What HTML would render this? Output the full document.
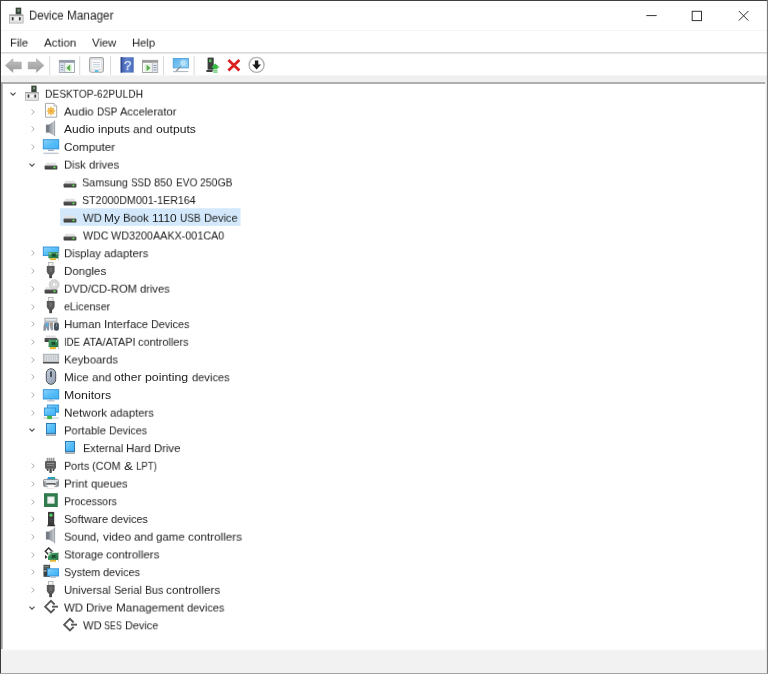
<!DOCTYPE html>
<html><head><meta charset="utf-8"><title>Device Manager</title>
<style>
html,body{margin:0;padding:0;}
body{width:768px;height:674px;overflow:hidden;background:#fff;font-family:"Liberation Sans",sans-serif;font-size:11.8px;color:#1c1c1c;position:relative;}
.abs{position:absolute;}
.t{will-change:transform;position:absolute;white-space:nowrap;line-height:18px;height:18px;transform-origin:0 50%;}
.ic{position:absolute;overflow:visible;}
</style></head><body>

<svg width="0" height="0" style="position:absolute"><defs>
<linearGradient id="gscr" x1="0" y1="0" x2="1" y2="1"><stop offset="0" stop-color="#8dd3fb"/><stop offset="0.5" stop-color="#56bef8"/><stop offset="1" stop-color="#40b0f4"/></linearGradient>
<linearGradient id="gspk" x1="0" y1="0" x2="1" y2="0"><stop offset="0" stop-color="#8a9098"/><stop offset="0.45" stop-color="#a9afb6"/><stop offset="1" stop-color="#d6d9dd"/></linearGradient>
<linearGradient id="gmouse" x1="0" y1="0" x2="1" y2="1"><stop offset="0" stop-color="#c4cedb"/><stop offset="1" stop-color="#8e9cb0"/></linearGradient>
<linearGradient id="ggrn" x1="0" y1="0" x2="1" y2="1"><stop offset="0" stop-color="#5aa678"/><stop offset="0.5" stop-color="#2f8a52"/><stop offset="1" stop-color="#217044"/></linearGradient>
<linearGradient id="gdisk" x1="0" y1="0" x2="0" y2="1"><stop offset="0" stop-color="#5a5a5a"/><stop offset="1" stop-color="#3a3a3a"/></linearGradient>
<radialGradient id="gdvd"><stop offset="0" stop-color="#ffffff"/><stop offset="0.25" stop-color="#fafafa"/><stop offset="0.32" stop-color="#c4c4c4"/><stop offset="0.5" stop-color="#e6e6e6"/><stop offset="0.7" stop-color="#cfcfcf"/><stop offset="1" stop-color="#dcdcdc"/></radialGradient>
</defs></svg>
<svg class="ic" style="left:0;top:0" width="768" height="674" viewBox="0 0 768 674"><rect x="1" y="30.1" width="766" height="0.9" fill="#f4f4f4"/><rect x="1" y="52.4" width="766" height="1.0" fill="#c4c4c4"/><rect x="1" y="75.4" width="766" height="6.9" fill="#f0f0f0"/><rect x="1" y="82.2" width="764.4" height="1.6" fill="#9c9c9c"/><rect x="1" y="82.2" width="1.7" height="567.2" fill="#a2a2a2"/><rect x="765.4" y="82.2" width="1.6" height="568" fill="#f3f3f3"/><rect x="1" y="649.4" width="766" height="1.2" fill="#f3f3f3"/><rect x="1" y="651.2" width="766" height="0.8" fill="#ececec"/><rect x="1" y="651.8" width="766" height="21.4" fill="#f2f2f2"/><rect x="60" y="208.25" width="180.6" height="17.55" fill="#d3e9fb"/></svg>
<div><span class="t" style="left:29.05px;top:6.00px;font-size:12.3px;transform:translateY(0.60px) scaleX(0.9207);">Device </span><span class="t" style="left:66.90px;top:6.00px;font-size:12.3px;transform:translateY(0.60px) scaleX(0.9593);">Manager</span></div>
<div><span class="t" style="left:10.35px;top:33.00px;transform:translateY(0.60px) scaleX(0.9521);">File</span></div>
<div><span class="t" style="left:43.95px;top:33.00px;transform:translateY(0.60px) scaleX(0.9835);">Action</span></div>
<div><span class="t" style="left:92.35px;top:33.00px;transform:translateY(0.60px) scaleX(0.9605);">View</span></div>
<div><span class="t" style="left:131.85px;top:33.00px;transform:translateY(0.60px) scaleX(0.9518);">Help</span></div>
<div><span class="t" style="left:45.05px;top:84.00px;transform:translateY(0.75px) scaleX(0.8650);">DESKTOP-62PULDH</span></div>
<div><span class="t" style="left:63.80px;top:102.00px;transform:translateY(0.47px) scaleX(0.9837);">Audio </span><span class="t" style="left:96.57px;top:102.00px;transform:translateY(0.47px) scaleX(0.8338);">DSP </span><span class="t" style="left:119.89px;top:102.00px;transform:translateY(0.47px) scaleX(0.9440);">Accelerator</span></div>
<div><span class="t" style="left:63.80px;top:120.00px;transform:translateY(0.18px) scaleX(1.0197);">Audio </span><span class="t" style="left:97.77px;top:120.00px;transform:translateY(0.18px) scaleX(1.0137);">inputs </span><span class="t" style="left:132.88px;top:120.00px;transform:translateY(0.18px) scaleX(0.9897);">and </span><span class="t" style="left:155.56px;top:120.00px;transform:translateY(0.18px) scaleX(1.0311);">outputs</span></div>
<div><span class="t" style="left:63.80px;top:137.00px;transform:translateY(0.90px) scaleX(0.9878);">Computer</span></div>
<div><span class="t" style="left:63.80px;top:155.00px;transform:translateY(0.62px) scaleX(0.9451);">Disk </span><span class="t" style="left:88.66px;top:155.00px;transform:translateY(0.62px) scaleX(0.9624);">drives</span></div>
<div><span class="t" style="left:82.30px;top:173.00px;transform:translateY(0.33px) scaleX(0.9212);">Samsung </span><span class="t" style="left:131.31px;top:173.00px;transform:translateY(0.33px) scaleX(0.8245);">SSD </span><span class="t" style="left:154.41px;top:173.00px;transform:translateY(0.33px) scaleX(0.9324);">850 </span><span class="t" style="left:175.87px;top:173.00px;transform:translateY(0.33px) scaleX(0.8567);">EVO </span><span class="t" style="left:200.32px;top:173.00px;transform:translateY(0.33px) scaleX(0.8884);">250GB</span></div>
<div><span class="t" style="left:82.30px;top:191.00px;transform:translateY(0.05px) scaleX(0.9028);">ST2000DM001-1ER164</span></div>
<div><span class="t" style="left:82.55px;top:208.00px;transform:translateY(0.77px) scaleX(0.9537);">WD </span><span class="t" style="left:104.44px;top:208.00px;transform:translateY(0.77px) scaleX(1.0062);">My </span><span class="t" style="left:123.42px;top:208.00px;transform:translateY(0.77px) scaleX(0.9563);">Book </span><span class="t" style="left:152.28px;top:208.00px;transform:translateY(0.77px) scaleX(1.0098);">1110 </span><span class="t" style="left:180.15px;top:208.00px;transform:translateY(0.77px) scaleX(0.8470);">USB </span><span class="t" style="left:203.84px;top:208.00px;transform:translateY(0.77px) scaleX(0.9319);">Device</span></div>
<div><span class="t" style="left:82.55px;top:226.00px;transform:translateY(0.49px) scaleX(0.8992);">WDC </span><span class="t" style="left:110.97px;top:226.00px;transform:translateY(0.49px) scaleX(0.9139);">WD3200AAKX-001CA0</span></div>
<div><span class="t" style="left:64.05px;top:244.00px;transform:translateY(0.20px) scaleX(0.9546);">Display </span><span class="t" style="left:104.14px;top:244.00px;transform:translateY(0.20px) scaleX(0.9654);">adapters</span></div>
<div><span class="t" style="left:64.05px;top:261.00px;transform:translateY(0.92px) scaleX(0.9739);">Dongles</span></div>
<div><span class="t" style="left:64.05px;top:279.00px;transform:translateY(0.64px) scaleX(0.9520);">DVD/CD-ROM </span><span class="t" style="left:140.16px;top:279.00px;transform:translateY(0.64px) scaleX(0.9465);">drives</span></div>
<div><span class="t" style="left:63.80px;top:297.00px;transform:translateY(0.35px) scaleX(0.9023);">eLicenser</span></div>
<div><span class="t" style="left:64.05px;top:315.00px;transform:translateY(0.07px) scaleX(0.9683);">Human </span><span class="t" style="left:104.00px;top:315.00px;transform:translateY(0.07px) scaleX(0.9610);">Interface </span><span class="t" style="left:151.25px;top:315.00px;transform:translateY(0.07px) scaleX(0.9163);">Devices</span></div>
<div><span class="t" style="left:64.05px;top:332.00px;transform:translateY(0.79px) scaleX(0.8116);">IDE </span><span class="t" style="left:82.97px;top:332.00px;transform:translateY(0.79px) scaleX(0.9238);">ATA/ATAPI </span><span class="t" style="left:138.40px;top:332.00px;transform:translateY(0.79px) scaleX(0.9291);">controllers</span></div>
<div><span class="t" style="left:64.05px;top:350.00px;transform:translateY(0.50px) scaleX(0.9558);">Keyboards</span></div>
<div><span class="t" style="left:64.05px;top:368.00px;transform:translateY(0.22px) scaleX(0.9917);">Mice </span><span class="t" style="left:91.93px;top:368.00px;transform:translateY(0.22px) scaleX(0.9829);">and </span><span class="t" style="left:114.46px;top:368.00px;transform:translateY(0.22px) scaleX(1.0210);">other </span><span class="t" style="left:145.10px;top:368.00px;transform:translateY(0.22px) scaleX(1.0459);">pointing </span><span class="t" style="left:191.51px;top:368.00px;transform:translateY(0.22px) scaleX(0.9425);">devices</span></div>
<div><span class="t" style="left:64.05px;top:385.00px;transform:translateY(0.94px) scaleX(1.0423);">Monitors</span></div>
<div><span class="t" style="left:64.05px;top:403.00px;transform:translateY(0.66px) scaleX(0.9968);">Network </span><span class="t" style="left:110.32px;top:403.00px;transform:translateY(0.66px) scaleX(0.9560);">adapters</span></div>
<div><span class="t" style="left:64.05px;top:421.00px;transform:translateY(0.37px) scaleX(0.9548);">Portable </span><span class="t" style="left:109.11px;top:421.00px;transform:translateY(0.37px) scaleX(0.9078);">Devices</span></div>
<div><span class="t" style="left:82.55px;top:439.00px;transform:translateY(0.09px) scaleX(0.9308);">External </span><span class="t" style="left:125.98px;top:439.00px;transform:translateY(0.09px) scaleX(0.9722);">Hard </span><span class="t" style="left:154.00px;top:439.00px;transform:translateY(0.09px) scaleX(0.9608);">Drive</span></div>
<div><span class="t" style="left:64.05px;top:456.00px;transform:translateY(0.81px) scaleX(0.9141);">Ports </span><span class="t" style="left:92.27px;top:456.00px;transform:translateY(0.81px) scaleX(0.9121);">(COM </span><span class="t" style="left:124.01px;top:456.00px;transform:translateY(0.81px) scaleX(1.1352);">&amp; </span><span class="t" style="left:136.00px;top:456.00px;transform:translateY(0.81px) scaleX(0.8099);">LPT)</span></div>
<div><span class="t" style="left:64.05px;top:474.00px;transform:translateY(0.52px) scaleX(0.9729);">Print </span><span class="t" style="left:90.79px;top:474.00px;transform:translateY(0.52px) scaleX(0.9471);">queues</span></div>
<div><span class="t" style="left:64.05px;top:492.00px;transform:translateY(0.24px) scaleX(0.8966);">Processors</span></div>
<div><span class="t" style="left:64.05px;top:509.00px;transform:translateY(0.96px) scaleX(0.9471);">Software </span><span class="t" style="left:111.26px;top:509.00px;transform:translateY(0.96px) scaleX(0.9237);">devices</span></div>
<div><span class="t" style="left:64.05px;top:527.00px;transform:translateY(0.67px) scaleX(0.9450);">Sound, </span><span class="t" style="left:102.54px;top:527.00px;transform:translateY(0.67px) scaleX(0.9923);">video </span><span class="t" style="left:133.69px;top:527.00px;transform:translateY(0.67px) scaleX(0.9779);">and </span><span class="t" style="left:156.10px;top:527.00px;transform:translateY(0.67px) scaleX(0.9726);">game </span><span class="t" style="left:187.98px;top:527.00px;transform:translateY(0.67px) scaleX(0.9921);">controllers</span></div>
<div><span class="t" style="left:64.05px;top:545.00px;transform:translateY(0.39px) scaleX(0.9504);">Storage </span><span class="t" style="left:106.45px;top:545.00px;transform:translateY(0.39px) scaleX(0.9833);">controllers</span></div>
<div><span class="t" style="left:64.05px;top:563.00px;transform:translateY(0.11px) scaleX(0.9198);">System </span><span class="t" style="left:103.35px;top:563.00px;transform:translateY(0.11px) scaleX(0.9276);">devices</span></div>
<div><span class="t" style="left:64.05px;top:580.00px;transform:translateY(0.83px) scaleX(0.9498);">Universal </span><span class="t" style="left:113.92px;top:580.00px;transform:translateY(0.83px) scaleX(0.9220);">Serial </span><span class="t" style="left:144.92px;top:580.00px;transform:translateY(0.83px) scaleX(0.8932);">Bus </span><span class="t" style="left:166.26px;top:580.00px;transform:translateY(0.83px) scaleX(0.9961);">controllers</span></div>
<div><span class="t" style="left:63.80px;top:598.00px;transform:translateY(0.54px) scaleX(0.9613);">WD </span><span class="t" style="left:85.87px;top:598.00px;transform:translateY(0.54px) scaleX(0.9632);">Drive </span><span class="t" style="left:115.55px;top:598.00px;transform:translateY(0.54px) scaleX(0.9878);">Management </span><span class="t" style="left:186.72px;top:598.00px;transform:translateY(0.54px) scaleX(0.9373);">devices</span></div>
<div><span class="t" style="left:82.55px;top:616.00px;transform:translateY(0.26px) scaleX(0.9447);">WD </span><span class="t" style="left:104.24px;top:616.00px;transform:translateY(0.26px) scaleX(0.7545);">SES </span><span class="t" style="left:125.16px;top:616.00px;transform:translateY(0.26px) scaleX(0.9231);">Device</span></div>
<svg class="ic" style="left:8.30px;top:89.76px" width="10" height="8" viewBox="0 0 10 8"><path d="M2.5 2.7 L5 5.2 L7.5 2.7" fill="none" stroke="#4a4a4a" stroke-width="1.15"/></svg>
<svg class="ic" style="left:28.50px;top:106.73px" width="8" height="10" viewBox="0 0 8 10"><path d="M2.7 2.4 L5.2 5 L2.7 7.6" fill="none" stroke="#adadad" stroke-width="1.0"/></svg>
<svg class="ic" style="left:28.50px;top:124.44px" width="8" height="10" viewBox="0 0 8 10"><path d="M2.7 2.4 L5.2 5 L2.7 7.6" fill="none" stroke="#adadad" stroke-width="1.0"/></svg>
<svg class="ic" style="left:28.50px;top:142.16px" width="8" height="10" viewBox="0 0 8 10"><path d="M2.7 2.4 L5.2 5 L2.7 7.6" fill="none" stroke="#adadad" stroke-width="1.0"/></svg>
<svg class="ic" style="left:27.40px;top:160.63px" width="10" height="8" viewBox="0 0 10 8"><path d="M2.5 2.7 L5 5.2 L7.5 2.7" fill="none" stroke="#4a4a4a" stroke-width="1.15"/></svg>
<svg class="ic" style="left:28.50px;top:248.46px" width="8" height="10" viewBox="0 0 8 10"><path d="M2.7 2.4 L5.2 5 L2.7 7.6" fill="none" stroke="#adadad" stroke-width="1.0"/></svg>
<svg class="ic" style="left:28.50px;top:266.18px" width="8" height="10" viewBox="0 0 8 10"><path d="M2.7 2.4 L5.2 5 L2.7 7.6" fill="none" stroke="#adadad" stroke-width="1.0"/></svg>
<svg class="ic" style="left:28.50px;top:283.90px" width="8" height="10" viewBox="0 0 8 10"><path d="M2.7 2.4 L5.2 5 L2.7 7.6" fill="none" stroke="#adadad" stroke-width="1.0"/></svg>
<svg class="ic" style="left:28.50px;top:301.61px" width="8" height="10" viewBox="0 0 8 10"><path d="M2.7 2.4 L5.2 5 L2.7 7.6" fill="none" stroke="#adadad" stroke-width="1.0"/></svg>
<svg class="ic" style="left:28.50px;top:319.33px" width="8" height="10" viewBox="0 0 8 10"><path d="M2.7 2.4 L5.2 5 L2.7 7.6" fill="none" stroke="#adadad" stroke-width="1.0"/></svg>
<svg class="ic" style="left:28.50px;top:337.05px" width="8" height="10" viewBox="0 0 8 10"><path d="M2.7 2.4 L5.2 5 L2.7 7.6" fill="none" stroke="#adadad" stroke-width="1.0"/></svg>
<svg class="ic" style="left:28.50px;top:354.76px" width="8" height="10" viewBox="0 0 8 10"><path d="M2.7 2.4 L5.2 5 L2.7 7.6" fill="none" stroke="#adadad" stroke-width="1.0"/></svg>
<svg class="ic" style="left:28.50px;top:372.48px" width="8" height="10" viewBox="0 0 8 10"><path d="M2.7 2.4 L5.2 5 L2.7 7.6" fill="none" stroke="#adadad" stroke-width="1.0"/></svg>
<svg class="ic" style="left:28.50px;top:390.20px" width="8" height="10" viewBox="0 0 8 10"><path d="M2.7 2.4 L5.2 5 L2.7 7.6" fill="none" stroke="#adadad" stroke-width="1.0"/></svg>
<svg class="ic" style="left:28.50px;top:407.91px" width="8" height="10" viewBox="0 0 8 10"><path d="M2.7 2.4 L5.2 5 L2.7 7.6" fill="none" stroke="#adadad" stroke-width="1.0"/></svg>
<svg class="ic" style="left:27.40px;top:426.38px" width="10" height="8" viewBox="0 0 10 8"><path d="M2.5 2.7 L5 5.2 L7.5 2.7" fill="none" stroke="#4a4a4a" stroke-width="1.15"/></svg>
<svg class="ic" style="left:28.50px;top:461.07px" width="8" height="10" viewBox="0 0 8 10"><path d="M2.7 2.4 L5.2 5 L2.7 7.6" fill="none" stroke="#adadad" stroke-width="1.0"/></svg>
<svg class="ic" style="left:28.50px;top:478.78px" width="8" height="10" viewBox="0 0 8 10"><path d="M2.7 2.4 L5.2 5 L2.7 7.6" fill="none" stroke="#adadad" stroke-width="1.0"/></svg>
<svg class="ic" style="left:28.50px;top:496.50px" width="8" height="10" viewBox="0 0 8 10"><path d="M2.7 2.4 L5.2 5 L2.7 7.6" fill="none" stroke="#adadad" stroke-width="1.0"/></svg>
<svg class="ic" style="left:28.50px;top:514.22px" width="8" height="10" viewBox="0 0 8 10"><path d="M2.7 2.4 L5.2 5 L2.7 7.6" fill="none" stroke="#adadad" stroke-width="1.0"/></svg>
<svg class="ic" style="left:28.50px;top:531.93px" width="8" height="10" viewBox="0 0 8 10"><path d="M2.7 2.4 L5.2 5 L2.7 7.6" fill="none" stroke="#adadad" stroke-width="1.0"/></svg>
<svg class="ic" style="left:28.50px;top:549.65px" width="8" height="10" viewBox="0 0 8 10"><path d="M2.7 2.4 L5.2 5 L2.7 7.6" fill="none" stroke="#adadad" stroke-width="1.0"/></svg>
<svg class="ic" style="left:28.50px;top:567.37px" width="8" height="10" viewBox="0 0 8 10"><path d="M2.7 2.4 L5.2 5 L2.7 7.6" fill="none" stroke="#adadad" stroke-width="1.0"/></svg>
<svg class="ic" style="left:28.50px;top:585.08px" width="8" height="10" viewBox="0 0 8 10"><path d="M2.7 2.4 L5.2 5 L2.7 7.6" fill="none" stroke="#adadad" stroke-width="1.0"/></svg>
<svg class="ic" style="left:27.40px;top:603.55px" width="10" height="8" viewBox="0 0 10 8"><path d="M2.5 2.7 L5 5.2 L7.5 2.7" fill="none" stroke="#4a4a4a" stroke-width="1.15"/></svg>
<svg class="ic" style="left:23.60px;top:85.46px" width="16" height="16" viewBox="0 0 16 16"><rect x="7.3" y="0.6" width="5.3" height="6.8" fill="#3c463e"/><rect x="9.1" y="2.2" width="1.9" height="2.1" fill="#78a87b"/><rect x="1.5" y="7.5" width="12.9" height="7.8" fill="#e4e4e4" stroke="#a9a9a9" stroke-width="0.7"/><rect x="1.5" y="7.3" width="12.9" height="1" fill="#9a9a9a"/><rect x="3.6" y="9.6" width="1.7" height="3.2" rx="0.8" fill="#3a3a3a"/><rect x="10.4" y="9.6" width="1.7" height="3.2" rx="0.8" fill="#3a3a3a"/><rect x="6.4" y="10" width="3" height="2.2" fill="#fafafa"/></svg>
<svg class="ic" style="left:43.00px;top:103.18px" width="16" height="16" viewBox="0 0 16 16"><path d="M2.5 0.4 H11 L13.7 3.1 V14.2 H2.5Z" fill="#fff" stroke="#9ea3a9" stroke-width="0.9"/><path d="M11 0.4 V3.1 H13.7" fill="#eef0f2" stroke="#9ea3a9" stroke-width="0.7"/><circle cx="8" cy="8" r="3" fill="#f2bb52"/><g stroke="#f2bb52" stroke-width="1.6"><path d="M8 3.8 V12.2 M3.8 8 H12.2 M5 5 L11 11 M11 5 L5 11"/></g><circle cx="8" cy="8" r="1.2" fill="#eaa93a"/></svg>
<svg class="ic" style="left:43.00px;top:120.89px" width="16" height="16" viewBox="0 0 16 16"><rect x="2.9" y="3.6" width="3.3" height="8" fill="#767c84"/><path d="M6 3.6 L12 -0.4 V15.2 L6 11.6Z" fill="url(#gspk)"/><rect x="11.2" y="-0.4" width="0.9" height="15.6" fill="#969ca3"/></svg>
<svg class="ic" style="left:43.00px;top:138.61px" width="16" height="16" viewBox="0 0 16 16"><rect x="0.3" y="0.7" width="15.4" height="9.2" fill="url(#gscr)" stroke="#2e8fd8" stroke-width="0.9"/><rect x="5" y="10.4" width="6" height="1.6" fill="#9fb0c4"/><rect x="0.4" y="13.6" width="15.2" height="1.5" fill="#c3cbd6"/></svg>
<svg class="ic" style="left:43.00px;top:156.33px" width="16" height="16" viewBox="0 0 16 16"><path d="M2.2 9.6 L3.4 6.8 H12.6 L13.8 9.6Z" fill="#e2e2e2"/><rect x="1.6" y="9.5" width="12.8" height="3.9" rx="0.7" fill="url(#gdisk)"/><rect x="10" y="10.5" width="2.8" height="1.9" fill="#3f9a3c"/><rect x="10.8" y="10.8" width="1.4" height="1.2" fill="#7fe070"/></svg>
<svg class="ic" style="left:61.60px;top:174.04px" width="16" height="16" viewBox="0 0 16 16"><path d="M2.2 9.6 L3.4 6.8 H12.6 L13.8 9.6Z" fill="#e2e2e2"/><rect x="1.6" y="9.5" width="12.8" height="3.9" rx="0.7" fill="url(#gdisk)"/><rect x="10" y="10.5" width="2.8" height="1.9" fill="#3f9a3c"/><rect x="10.8" y="10.8" width="1.4" height="1.2" fill="#7fe070"/></svg>
<svg class="ic" style="left:61.60px;top:191.76px" width="16" height="16" viewBox="0 0 16 16"><path d="M2.2 9.6 L3.4 6.8 H12.6 L13.8 9.6Z" fill="#e2e2e2"/><rect x="1.6" y="9.5" width="12.8" height="3.9" rx="0.7" fill="url(#gdisk)"/><rect x="10" y="10.5" width="2.8" height="1.9" fill="#3f9a3c"/><rect x="10.8" y="10.8" width="1.4" height="1.2" fill="#7fe070"/></svg>
<svg class="ic" style="left:61.60px;top:209.48px" width="16" height="16" viewBox="0 0 16 16"><path d="M2.2 9.6 L3.4 6.8 H12.6 L13.8 9.6Z" fill="#e2e2e2"/><rect x="1.6" y="9.5" width="12.8" height="3.9" rx="0.7" fill="url(#gdisk)"/><rect x="10" y="10.5" width="2.8" height="1.9" fill="#3f9a3c"/><rect x="10.8" y="10.8" width="1.4" height="1.2" fill="#7fe070"/></svg>
<svg class="ic" style="left:61.60px;top:227.19px" width="16" height="16" viewBox="0 0 16 16"><path d="M2.2 9.6 L3.4 6.8 H12.6 L13.8 9.6Z" fill="#e2e2e2"/><rect x="1.6" y="9.5" width="12.8" height="3.9" rx="0.7" fill="url(#gdisk)"/><rect x="10" y="10.5" width="2.8" height="1.9" fill="#3f9a3c"/><rect x="10.8" y="10.8" width="1.4" height="1.2" fill="#7fe070"/></svg>
<svg class="ic" style="left:43.00px;top:244.91px" width="16" height="16" viewBox="0 0 16 16"><rect x="0.3" y="2" width="15.4" height="8.6" fill="url(#gscr)" stroke="#2e8fd8" stroke-width="0.9"/><rect x="5.4" y="7" width="10.2" height="6.3" fill="url(#ggrn)"/><rect x="9" y="9" width="3.6" height="2.6" fill="#1d4a2e"/><rect x="6.4" y="8" width="1.2" height="1.2" fill="#bfe6c8"/><rect x="13.4" y="8.2" width="1.2" height="1.2" fill="#bfe6c8"/><rect x="7" y="13.3" width="6" height="1.8" fill="#e3b52e"/><rect x="15.1" y="6.4" width="0.7" height="8.6" fill="#b8b8b8"/></svg>
<svg class="ic" style="left:43.00px;top:262.63px" width="16" height="16" viewBox="0 0 16 16"><rect x="5.4" y="-0.5" width="4.6" height="3.6" fill="#f4f4f4" stroke="#b4b4b4" stroke-width="0.9"/><path d="M3.8 3 H11.6 V8.2 Q11.6 10.6 9.4 11.9 H6 Q3.8 10.6 3.8 8.2Z" fill="#585858"/><rect x="6.2" y="4.6" width="3" height="4.4" rx="1" fill="#6c6c6c"/><rect x="6.2" y="11.6" width="2.8" height="3.6" fill="#474747"/></svg>
<svg class="ic" style="left:43.00px;top:280.35px" width="16" height="16" viewBox="0 0 16 16"><path d="M2.2 9.8 L3.4 6.9 H9 V9.8Z" fill="#e4e4e4"/><circle cx="11.2" cy="4.6" r="5.1" fill="url(#gdvd)" stroke="#c2c2c2" stroke-width="0.5"/><rect x="1.6" y="9.6" width="12.8" height="3.8" rx="0.7" fill="url(#gdisk)"/><rect x="10" y="10.5" width="2.8" height="1.9" fill="#3f9a3c"/><rect x="10.8" y="10.8" width="1.4" height="1.2" fill="#7fe070"/></svg>
<svg class="ic" style="left:43.00px;top:298.06px" width="16" height="16" viewBox="0 0 16 16"><rect x="5.4" y="-0.5" width="4.6" height="3.6" fill="#f4f4f4" stroke="#b4b4b4" stroke-width="0.9"/><path d="M3.8 3 H11.6 V8.2 Q11.6 10.6 9.4 11.9 H6 Q3.8 10.6 3.8 8.2Z" fill="#585858"/><rect x="6.2" y="4.6" width="3" height="4.4" rx="1" fill="#6c6c6c"/><rect x="6.2" y="11.6" width="2.8" height="3.6" fill="#474747"/></svg>
<svg class="ic" style="left:43.00px;top:315.78px" width="16" height="16" viewBox="0 0 16 16"><rect x="1.3" y="1.7" width="13.1" height="4.9" fill="#b6bbc0"/><rect x="2.6" y="3.2" width="10.6" height="1.3" fill="#f4f5f6"/><path d="M1.6 6.4 H6.2 V14.6 H4.4 L3.6 11.6 L2.6 14.7 H0.4 Q-0.2 10 1.6 6.4Z" fill="#8c97a4"/><rect x="3" y="6.9" width="2.2" height="3.6" fill="#58aee0"/><path d="M6.5 6.5 H10 V14.3 H8 Q6.6 11 6.5 6.5Z" fill="#979fa9"/><rect x="7.6" y="6.9" width="1.1" height="2.8" fill="#c98f55"/><rect x="10.9" y="6.6" width="5" height="8.2" rx="2.1" fill="#47525f"/><rect x="13" y="7.6" width="0.8" height="3" fill="#8d9aa8"/></svg>
<svg class="ic" style="left:43.00px;top:333.50px" width="16" height="16" viewBox="0 0 16 16"><path d="M2.2 4.2 L3.2 1.6 H12.4 L13.4 4.2Z" fill="#e0e0e0"/><rect x="1.6" y="4" width="12.6" height="4" rx="0.6" fill="url(#gdisk)"/><rect x="5.6" y="5.6" width="9.8" height="7.5" fill="url(#ggrn)"/><rect x="8.6" y="8" width="3.6" height="2.8" fill="#1d4a2e"/><rect x="12.8" y="6.6" width="1.2" height="1.2" fill="#bfe6c8"/><rect x="6.8" y="13.1" width="6.2" height="2.1" fill="#e3b52e"/><rect x="15" y="5" width="0.7" height="10.2" fill="#b8b8b8"/></svg>
<svg class="ic" style="left:43.00px;top:351.21px" width="16" height="16" viewBox="0 0 16 16"><rect x="0.2" y="3.1" width="15.6" height="8.2" fill="#bcc1c6" stroke="#a2a8ae" stroke-width="0.6"/><g fill="#eef0f1"><rect x="1.6" y="4.5" width="12.8" height="1.1"/><rect x="1.6" y="6.5" width="12.8" height="1.1"/><rect x="1.6" y="8.5" width="12.8" height="1.1"/></g><g fill="#bcc1c6"><rect x="3.4" y="4.4" width="0.6" height="5.4"/><rect x="5.6" y="4.4" width="0.6" height="5.4"/><rect x="7.8" y="4.4" width="0.6" height="5.4"/><rect x="10" y="4.4" width="0.6" height="5.4"/><rect x="12.2" y="4.4" width="0.6" height="5.4"/></g><rect x="0" y="11.1" width="16" height="1.4" fill="#474747"/></svg>
<svg class="ic" style="left:43.00px;top:368.93px" width="16" height="16" viewBox="0 0 16 16"><rect x="3.3" y="-0.3" width="9.4" height="15.6" rx="4.7" fill="url(#gmouse)" stroke="#4a5058" stroke-width="1"/><rect x="7.1" y="2.2" width="1.8" height="6" rx="0.9" fill="#3f454d"/></svg>
<svg class="ic" style="left:43.00px;top:386.65px" width="16" height="16" viewBox="0 0 16 16"><rect x="0.3" y="2.7" width="15.4" height="9.3" fill="url(#gscr)" stroke="#2e8fd8" stroke-width="0.9"/><rect x="7" y="12.4" width="2" height="1" fill="#9aa4b0"/><rect x="4.2" y="13.4" width="7.6" height="1" fill="#a9b2be"/></svg>
<svg class="ic" style="left:43.00px;top:404.36px" width="16" height="16" viewBox="0 0 16 16"><rect x="4.4" y="1" width="11.2" height="7.2" fill="url(#gscr)" stroke="#2e8fd8" stroke-width="0.9"/><rect x="1.4" y="4" width="11.2" height="7.4" fill="url(#gscr)" stroke="#2e8fd8" stroke-width="0.9"/><rect x="0.2" y="13.2" width="15.6" height="1.9" fill="#dedede"/><rect x="4.2" y="11.8" width="4.8" height="3.3" fill="#42b648"/></svg>
<svg class="ic" style="left:43.00px;top:422.08px" width="16" height="16" viewBox="0 0 16 16"><rect x="3.1" y="1" width="9.8" height="12.7" fill="#7f8d9a"/><rect x="3.5" y="1.4" width="9" height="9.9" fill="url(#gscr)" stroke="#2474b0" stroke-width="0.9"/><rect x="3.8" y="12.1" width="8.4" height="0.7" fill="#c9d2db"/></svg>
<svg class="ic" style="left:61.60px;top:439.80px" width="16" height="16" viewBox="0 0 16 16"><rect x="3.1" y="1" width="9.8" height="12.7" fill="#7f8d9a"/><rect x="3.5" y="1.4" width="9" height="9.9" fill="url(#gscr)" stroke="#2474b0" stroke-width="0.9"/><rect x="3.8" y="12.1" width="8.4" height="0.7" fill="#c9d2db"/></svg>
<svg class="ic" style="left:43.00px;top:457.52px" width="16" height="16" viewBox="0 0 16 16"><rect x="3.2" y="-0.2" width="8.6" height="3.4" fill="#d6d6d6"/><g fill="#8a8a8a"><rect x="4.2" y="-0.2" width="1" height="3.2"/><rect x="6.2" y="-0.2" width="1" height="3.2"/><rect x="8.2" y="-0.2" width="1" height="3.2"/><rect x="10.2" y="-0.2" width="1" height="3.2"/></g><rect x="2" y="3" width="11" height="7.8" rx="1" fill="#5e5e5e"/><rect x="3.8" y="5" width="7.4" height="0.9" fill="#9a9a9a"/><rect x="3.8" y="7" width="7.4" height="0.9" fill="#8a8a8a"/><path d="M3.2 10.6 H5.6 V13 H4.2Z M6.4 10.6 H8.8 V15 H6.4Z M9.6 10.6 H12 L11 13 H9.6Z" fill="#4c4c4c"/></svg>
<svg class="ic" style="left:43.00px;top:475.23px" width="16" height="16" viewBox="0 0 16 16"><path d="M4 4.8 L5 2.1 H11.6 L12.6 4.8Z" fill="#2a9be2"/><path d="M7.6 2.1 H11.6 L12.6 4.8 H8.4Z" fill="#1fa9a0"/><rect x="0.5" y="4.4" width="15" height="7.2" rx="1" fill="#dfe3e7" stroke="#767b80" stroke-width="0.8"/><rect x="0.9" y="6.4" width="1.8" height="4.8" fill="#8a8f94"/><rect x="13.3" y="6.4" width="1.8" height="4.8" fill="#8a8f94"/><rect x="3.4" y="8.2" width="9.2" height="1.7" fill="#3a3a3a"/><rect x="4.4" y="9.8" width="7.2" height="3.5" fill="#fdfdfd" stroke="#d2d2d2" stroke-width="0.5"/></svg>
<svg class="ic" style="left:43.00px;top:492.95px" width="16" height="16" viewBox="0 0 16 16"><rect x="1" y="0.2" width="13.8" height="13.8" fill="#317a4e"/><rect x="4.3" y="3.5" width="7.3" height="7.2" fill="#dfe9e4"/><rect x="5.4" y="4.6" width="5.1" height="5" fill="#f3f6f4"/></svg>
<svg class="ic" style="left:43.00px;top:510.67px" width="16" height="16" viewBox="0 0 16 16"><rect x="5" y="0.9" width="6.2" height="13" fill="#3a3a3a"/><circle cx="8" cy="4.2" r="1.6" fill="#4fd162"/><rect x="6.4" y="8" width="3.4" height="0.7" fill="#5a5a5a"/><rect x="6.4" y="9.8" width="3.4" height="0.7" fill="#5a5a5a"/><path d="M4 15.2 L5 13.4 H11.4 L12.4 15.2Z" fill="#2c2c2c"/></svg>
<svg class="ic" style="left:43.00px;top:528.38px" width="16" height="16" viewBox="0 0 16 16"><rect x="2.9" y="3.6" width="3.3" height="8" fill="#767c84"/><path d="M6 3.6 L12 -0.4 V15.2 L6 11.6Z" fill="url(#gspk)"/><rect x="11.2" y="-0.4" width="0.9" height="15.6" fill="#969ca3"/></svg>
<svg class="ic" style="left:43.00px;top:546.10px" width="16" height="16" viewBox="0 0 16 16"><path d="M5.7 1.9 L9.1 5.3 L5.7 8.7 L2.3 5.3Z" fill="none" stroke="#2e2e2e" stroke-width="1.4"/><rect x="7.6" y="4.7" width="2.8" height="1.3" fill="#9a9a9a"/><path d="M2 8.9 L4.6 11 L2 13.1Z" fill="#333"/><rect x="5" y="6.8" width="10.4" height="7.1" fill="url(#ggrn)"/><path d="M5 6.8 H9 L5 10.4Z" fill="#cfe6d6" opacity="0.75"/><rect x="8.8" y="9" width="3.8" height="2.8" fill="#1d4a2e"/><rect x="7" y="13.9" width="6" height="1.8" fill="#e3b52e"/><rect x="15" y="5.6" width="0.7" height="10" fill="#b8b8b8"/></svg>
<svg class="ic" style="left:43.00px;top:563.82px" width="16" height="16" viewBox="0 0 16 16"><rect x="0.5" y="0.8" width="6.6" height="12" fill="#3b3f42"/><rect x="1.2" y="1.8" width="5" height="0.9" fill="#8fae8f"/><rect x="1.2" y="3.6" width="5" height="0.8" fill="#808890"/><rect x="1.2" y="6" width="2.2" height="1.6" fill="#a9b4bd"/><rect x="4.4" y="4.8" width="11.2" height="7.2" fill="url(#gscr)" stroke="#2e8fd8" stroke-width="0.9"/><rect x="7.4" y="12.6" width="5.4" height="1.2" fill="#aab3be"/></svg>
<svg class="ic" style="left:43.00px;top:581.53px" width="16" height="16" viewBox="0 0 16 16"><rect x="5.4" y="-0.5" width="4.6" height="3.6" fill="#f4f4f4" stroke="#b4b4b4" stroke-width="0.9"/><path d="M3.8 3 H11.6 V8.2 Q11.6 10.6 9.4 11.9 H6 Q3.8 10.6 3.8 8.2Z" fill="#585858"/><rect x="6.2" y="4.6" width="3" height="4.4" rx="1" fill="#6c6c6c"/><rect x="6.2" y="11.6" width="2.8" height="3.6" fill="#474747"/></svg>
<svg class="ic" style="left:43.00px;top:599.25px" width="16" height="16" viewBox="0 0 16 16"><path d="M11.6 5.5 L7.95 1.85 L2.15 7.65 L7.95 13.45 L11.6 9.8" fill="none" stroke="#585858" stroke-width="1.9" stroke-linejoin="miter"/><rect x="9" y="6.7" width="6" height="1.9" fill="#585858"/></svg>
<svg class="ic" style="left:61.60px;top:616.97px" width="16" height="16" viewBox="0 0 16 16"><path d="M11.6 5.5 L7.95 1.85 L2.15 7.65 L7.95 13.45 L11.6 9.8" fill="none" stroke="#585858" stroke-width="1.9" stroke-linejoin="miter"/><rect x="9" y="6.7" width="6" height="1.9" fill="#585858"/></svg>
<svg class="ic" style="left:7.8px;top:6.9px" width="16.8" height="16.8" viewBox="0 0 16 16"><rect x="7.3" y="0.6" width="5.3" height="6.8" fill="#3c463e"/><rect x="9.1" y="2.2" width="1.9" height="2.1" fill="#78a87b"/><rect x="1.5" y="7.5" width="12.9" height="7.8" fill="#e4e4e4" stroke="#a9a9a9" stroke-width="0.7"/><rect x="1.5" y="7.3" width="12.9" height="1" fill="#9a9a9a"/><rect x="3.6" y="9.6" width="1.7" height="3.2" rx="0.8" fill="#3a3a3a"/><rect x="10.4" y="9.6" width="1.7" height="3.2" rx="0.8" fill="#3a3a3a"/><rect x="6.4" y="10" width="3" height="2.2" fill="#fafafa"/></svg>
<svg class="ic" style="left:640px;top:5px" width="120" height="22" viewBox="0 0 120 22"><path d="M6.3 10.6 H16.7" stroke="#333" stroke-width="1" fill="none"/><rect x="52.2" y="6.3" width="9.3" height="9.3" fill="none" stroke="#333" stroke-width="1"/><path d="M98.8 6 L108.4 15.6 M108.4 6 L98.8 15.6" stroke="#333" stroke-width="1" fill="none"/></svg>
<svg class="ic" style="left:0;top:53px;will-change:transform" width="300" height="24" viewBox="0 53 300 24">
<defs>
<linearGradient id="gar" x1="0" y1="0" x2="0" y2="1"><stop offset="0" stop-color="#c2c2c2"/><stop offset="1" stop-color="#999999"/></linearGradient>
<linearGradient id="ghelp" x1="0" y1="0" x2="1" y2="0"><stop offset="0" stop-color="#3c58a6"/><stop offset="0.5" stop-color="#6384cf"/><stop offset="1" stop-color="#4a6cbc"/></linearGradient>
<linearGradient id="gmon" x1="0" y1="0" x2="1" y2="1"><stop offset="0" stop-color="#58b0ec"/><stop offset="1" stop-color="#92d4f8"/></linearGradient>
</defs>
<!-- back / forward arrows -->
<path d="M5.3 65.5 L13 58.6 V62 H21.4 V69 H13 V72.5 Z" fill="url(#gar)" stroke="#a8a8a8" stroke-width="0.5"/>
<path d="M44 65.5 L36.4 58.6 V62 H28.1 V69 H36.4 V72.5 Z" fill="url(#gar)" stroke="#a8a8a8" stroke-width="0.5"/>
<!-- separators -->
<rect x="49.2" y="56" width="1" height="19" fill="#dadada"/>
<rect x="79.2" y="56" width="1" height="19" fill="#dadada"/>
<rect x="110" y="56" width="1" height="19" fill="#dadada"/>
<rect x="163" y="56" width="1" height="19" fill="#dadada"/>
<rect x="193.6" y="56" width="1" height="19" fill="#dadada"/>
<!-- show/hide tree -->
<g>
<rect x="59.3" y="60.3" width="15.2" height="12.2" fill="#fbfcfc" stroke="#9098a4" stroke-width="0.8"/>
<rect x="59.3" y="60.3" width="15.2" height="2.5" fill="#929aa8"/>
<rect x="59.8" y="62.9" width="4.8" height="9.2" fill="#dde2ea"/>
<rect x="64.4" y="62.9" width="0.8" height="9.2" fill="#a4acb6"/>
<rect x="60.8" y="65" width="2.6" height="0.9" fill="#8595b3"/>
<rect x="60.8" y="67.2" width="2.6" height="0.9" fill="#8595b3"/>
<rect x="60.8" y="69.4" width="2.6" height="0.9" fill="#8595b3"/>
<rect x="65.8" y="64.2" width="6.2" height="7.4" fill="#e4f3df"/>
<path d="M66.4 67.9 L70.2 64.6 V71.2 Z" fill="#55ab4c"/>
</g>
<!-- properties -->
<g>
<rect x="89.6" y="57.6" width="13.8" height="14.6" rx="1.6" fill="#ededed" stroke="#a6a6a6" stroke-width="1.1"/>
<rect x="91.2" y="59.6" width="10.6" height="9.6" fill="#f8f8f8" stroke="#d2d5d9" stroke-width="0.6"/>
<rect x="93" y="62" width="7" height="0.8" fill="#bccbdd"/>
<rect x="93" y="64.2" width="7" height="0.8" fill="#bccbdd"/>
<rect x="93" y="66.4" width="7" height="0.8" fill="#bccbdd"/>
<rect x="95" y="70.2" width="3.4" height="1.6" fill="#38b6e8"/>
</g>
<!-- help -->
<g>
<rect x="120.7" y="57.2" width="13" height="15.4" fill="url(#ghelp)"/>
<rect x="120.7" y="57.2" width="1.4" height="15.4" fill="#30488f"/>
<text x="127.7" y="70.2" font-family="Liberation Sans, sans-serif" font-size="13.5" fill="#dfe7f8" stroke="#dfe7f8" stroke-width="0.2" text-anchor="middle">?</text>
</g>
<!-- action pane -->
<g>
<rect x="142.5" y="60.3" width="15.2" height="12.2" fill="#fbfcfc" stroke="#929292" stroke-width="0.8"/>
<rect x="142.5" y="60.3" width="15.2" height="2.5" fill="#9a9a9a"/>
<rect x="152.4" y="62.9" width="4.8" height="9.2" fill="#e4e7ec"/>
<rect x="151.8" y="62.9" width="0.8" height="9.2" fill="#a8adb4"/>
<rect x="153.6" y="65" width="2.8" height="0.9" fill="#8595b3"/>
<rect x="153.6" y="67.2" width="2.8" height="0.9" fill="#8595b3"/>
<rect x="153.6" y="69.4" width="2.8" height="0.9" fill="#8595b3"/>
<rect x="144.4" y="64.2" width="6.4" height="7.4" fill="#e4f3df"/>
<path d="M150.4 67.9 L146.6 64.6 V71.2 Z" fill="#55ab4c"/>
</g>
<!-- scan for hardware changes -->
<g>
<rect x="173.2" y="58.4" width="15.2" height="9.5" fill="url(#gmon)" stroke="#4a9bd2" stroke-width="0.8"/>
<circle cx="183.3" cy="63.1" r="3.1" fill="#b9e2f9" stroke="#a2d4f2" stroke-width="0.8"/>
<path d="M180.8 66.2 L175.3 72" stroke="#8a96a2" stroke-width="1.3"/>
<rect x="173" y="71" width="15.3" height="1.1" fill="#b2bac2"/>
</g>
<!-- update driver -->
<g>
<rect x="207.6" y="57.6" width="6.1" height="12.1" fill="#3b3f3b"/>
<rect x="209" y="59.3" width="2.5" height="2.9" fill="#58b858"/>
<rect x="206.4" y="70.1" width="6.2" height="1.8" fill="#2c2c2c"/>
<path d="M215.3 63.4 L219.6 67.5 H217.5 V68.9 H213.1 V67.5 H211 Z" fill="#35bb42"/>
<rect x="213.2" y="69.7" width="4.3" height="1" fill="#35bb42"/>
<rect x="213.2" y="71.5" width="4.3" height="1.1" fill="#35bb42"/>
</g>
<!-- red X -->
<path d="M228.4 60 L239.4 70.6 M239.4 60 L228.4 70.6" stroke="#dc1f1f" stroke-width="2.8" fill="none"/>
<!-- circle down arrow -->
<g>
<circle cx="256.6" cy="64.9" r="7.5" fill="#fdfdfd" stroke="#b2b2b2" stroke-width="1.4"/>
<path d="M254.9 60.6 H258.3 V64.4 H261 L256.6 69.6 L252.2 64.4 H254.9 Z" fill="#1a1a1a"/>
</g>
</svg>

<svg class="ic" style="left:0;top:0" width="768" height="674" viewBox="0 0 768 674"><rect x="0" y="0" width="768" height="0.95" fill="#353535"/><rect x="0" y="0" width="1" height="674" fill="#3a3a3a"/><rect x="766.9" y="0" width="1.1" height="674" fill="#7a7a7a"/><rect x="0" y="673.1" width="768" height="0.9" fill="#9a9a9a"/></svg>
</body></html>
